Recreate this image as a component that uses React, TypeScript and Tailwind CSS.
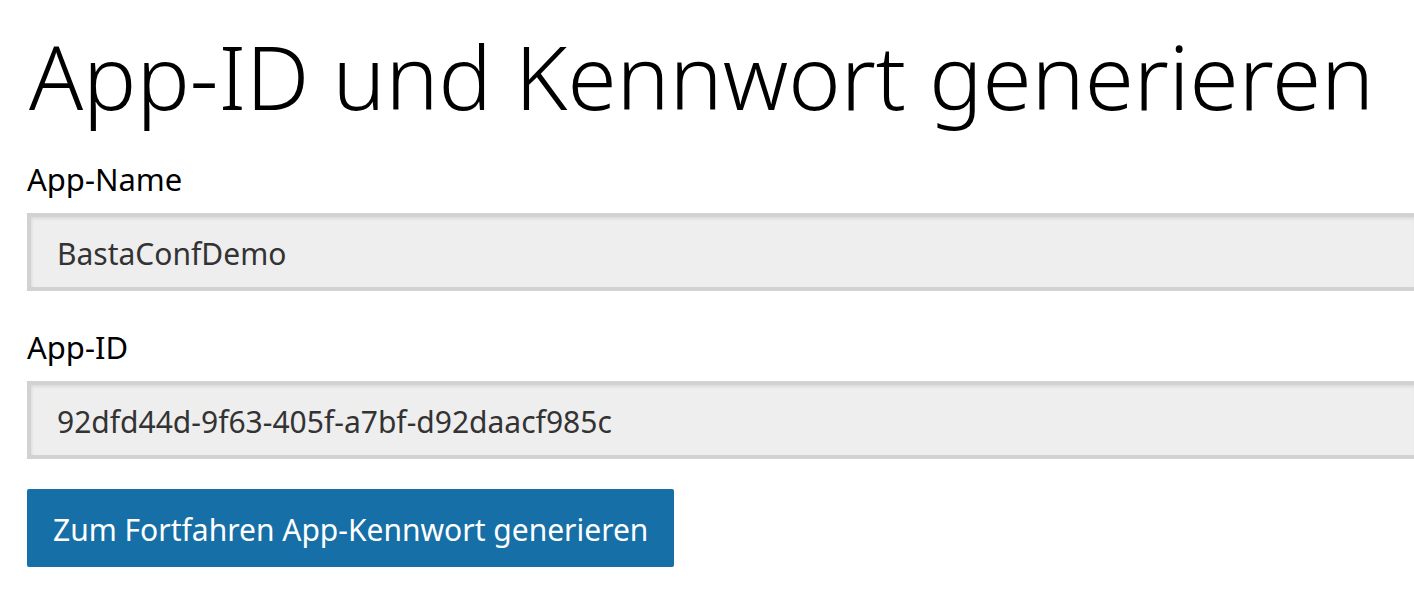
import { useState } from "react";

const fieldClass =
  "block h-[78px] w-full border-4 border-r-0 border-[#d2d2d2] bg-[#eeeeee] px-[26px] pt-[2px] text-[30px] text-[#333333] shadow-[inset_1px_2px_3px_rgba(0,0,0,0.08)] outline-none";
const labelClass = "mb-[15px] block text-[31px] leading-[38px]";

export default function App() {
  const [name, setName] = useState("BastaConfDemo");

  return (
    <main className="min-h-screen overflow-hidden bg-white pl-[27px] pt-3 font-['Noto_Sans',sans-serif] text-black">
      <h1 className="whitespace-nowrap pl-[2px] text-[89px] font-light leading-[128px]">
        App-ID und Kennwort generieren
      </h1>
      <form className="mt-5" onSubmit={(event) => event.preventDefault()}>
        <label htmlFor="app-name" className={labelClass}>App-Name</label>
        <input
          id="app-name"
          className={fieldClass}
          value={name}
          onChange={(event) => setName(event.target.value)}
        />
        <label htmlFor="app-id" className={`mt-[37px] ${labelClass}`}>App-ID</label>
        <input
          id="app-id"
          className={fieldClass}
          value="92dfd44d-9f63-405f-a7bf-d92daacf985c"
          readOnly
        />
        <button
          type="submit"
          className="mt-[30px] h-[78px] whitespace-nowrap rounded-[2px] bg-[#166fa6] px-[26px] pt-[2px] text-[30px] text-white"
        >
          Zum Fortfahren App-Kennwort generieren
        </button>
      </form>
    </main>
  );
}
